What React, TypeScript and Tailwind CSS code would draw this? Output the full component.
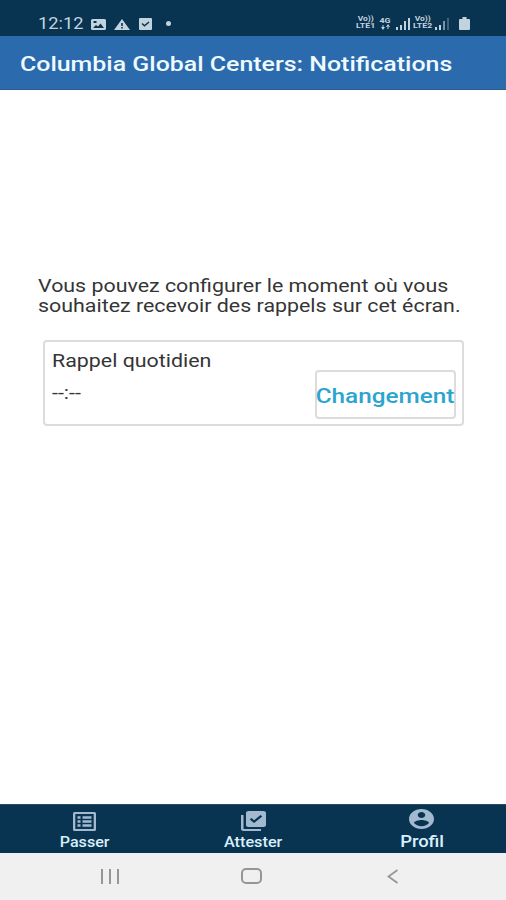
import type { ReactNode } from 'react';

function Glyph({ className, box = '0 0 24 24', children }: { className: string; box?: string; children: ReactNode }) {
  return (
    <svg viewBox={box} preserveAspectRatio="none" fill="currentColor" className={`block shrink-0 ${className}`}>
      {children}
    </svg>
  );
}

function Signal({ weak }: { weak?: boolean }) {
  return (
    <Glyph box="0 0 14 12" className="h-3 w-3.5">
      <path d="M0 9h2v3H0zM4 7h2v5H4z" />
      <path d="M8 3h2v9H8z" opacity={weak ? 0.6 : 1} />
      <path d="M12 0h2v12h-2z" opacity={weak ? 0.3 : 1} />
    </Glyph>
  );
}

function Volte({ line }: { line: string }) {
  return (
    <div className="flex w-[19px] flex-col items-center text-[7px] font-bold leading-[7px]">
      <div className="h-[7px] scale-x-[1.2]">Vo))</div>
      <div className="h-[7px] scale-x-[1.25] whitespace-nowrap">{line}</div>
    </div>
  );
}

function StatusBar() {
  return (
    <div className="flex h-9 shrink-0 items-end bg-[#083452] pb-1.5 text-[#c3d3de]">
      <div className="ml-[38px] w-[53px] text-[16px] leading-[13px]">
        <span className="inline-block origin-left scale-x-[1.14]">12:12</span>
      </div>
      <Glyph className="h-[11px] w-[15px]" box="0 0 15 11">
        <path fillRule="evenodd" d="M1.500 0h12Q15 0 15 1.500v8Q15 11 13.500 11h-12Q0 11 0 9.500v-8Q0 0 1.500 0zM2 9h11L9.500 4.500 7 7.500 5 6zM2.500 2v2h3V2z" />
      </Glyph>
      <Glyph className="ml-2 h-[11px] w-4" box="0 0 16 11">
        <path fillRule="evenodd" d="M8 0l8 11H0zM7.200 4v3h1.600V4zM7.200 8v1.500h1.600V8z" />
      </Glyph>
      <Glyph className="ml-[9px] h-3 w-[13px]" box="0 0 13 12">
        <rect width="13" height="12" rx="1" />
        <path d="M3 5.500l2.500 2.300L10 4" fill="none" stroke="#083452" strokeWidth="1.500" />
      </Glyph>
      <div className="mb-1 ml-[14px] size-[5px] rounded-full bg-current" />
      <div className="ml-auto mr-9 flex items-end">
        <Volte line="LTE1" />
        <div className="ml-[4px] w-3">
          <div className="scale-x-[1.1] text-center text-[8px] font-bold leading-[7px]">4G</div>
          <Glyph className="ml-0.5 h-[6px] w-[9px]" box="0 0 9 6">
            <path d="M0 3h4L2 6zM5 3h4L7 0zM1.500 1h1v3h-1zM6.500 2.500h1V5h-1z" />
          </Glyph>
        </div>
        <div className="ml-[5px]"><Signal /></div>
        <div className="ml-[3px]"><Volte line="LTE2" /></div>
        <div className="ml-[3px]"><Signal weak /></div>
        <Glyph className="ml-2.5 h-[13px] w-[11px]" box="0 0 11 13">
          <path d="M3.500 0h4v2H10q1 0 1 1v9q0 1-1 1H1q-1 0-1-1V3q0-1 1-1h2.500z" />
        </Glyph>
      </div>
    </div>
  );
}

function Tab({ icon, label, labelClass }: { icon: ReactNode; label: string; labelClass: string }) {
  return (
    <div className="flex flex-1 flex-col items-center">
      <div className="flex h-[28px] items-center text-[#a2b9d0]">{icon}</div>
      <span className={`text-[#d9effa] ${labelClass}`}>{label}</span>
    </div>
  );
}

export default function App() {
  return (
    <div className="flex h-[900px] w-[506px] flex-col overflow-hidden bg-white font-[Roboto,sans-serif]">
      <StatusBar />
      <header className="flex h-[54px] shrink-0 items-center border-b border-[#285b95] bg-[#2b6bad] pl-5 pt-0.5">
        <h1 className="origin-left scale-x-[1.246] whitespace-nowrap text-[20px] font-medium text-[#eefaff]">
          Columbia Global Centers: Notifications
        </h1>
      </header>

      <main className="grow pl-[38px] pt-[186px] text-[#353535]">
        <p className="w-[400px] origin-left scale-x-[1.188] whitespace-nowrap text-[18px] leading-5">
          Vous pouvez configurer le moment où vous
          <br />
          souhaitez recevoir des rappels sur cet écran.
        </p>
        <section className="ml-[5px] mt-[24px] flex h-[86px] w-[421px] justify-between rounded-[4px] border-2 border-[#dcdcdc] pl-[7px] pr-[6px]">
          <div className="origin-left scale-x-[1.188] whitespace-nowrap text-[18px] leading-5">
            <div className="mt-[9px]">Rappel quotidien</div>
            <div className="mt-[12px]">--:--</div>
          </div>
          <button className="mt-[28px] flex h-[49px] w-[141px] items-center justify-center rounded-[4px] border-2 border-[#dcdcdc] pt-0.5 text-[20px] font-medium text-[#2ba5d0]">
            <span className="scale-x-[1.215]">Changement</span>
          </button>
        </section>
      </main>

      <nav className="flex h-[49px] shrink-0 border-t border-[#2b4d64] bg-[#083452] pt-0.5">
        <Tab
          label="Passer"
          labelClass="text-[14px] leading-[14px] font-medium scale-x-[1.15]"
          icon={
            <Glyph className="mt-px h-[19px] w-[23px]" box="0 0 23 19">
              <path fillRule="evenodd" d="M1.500 0h20Q23 0 23 1.500v16Q23 19 21.500 19h-20Q0 19 0 17.500v-16Q0 0 1.500 0zM2.300 2v15h18.400V2z" />
              <path d="M4.500 4.300h3v2.500h-3zM4.500 8.300h3v2.500h-3zM4.500 12.300h3v2.500h-3zM9.500 4.300h9v2.500h-9zM9.500 8.300h9v2.500h-9zM9.500 12.300h9v2.500h-9z" />
            </Glyph>
          }
        />
        <Tab
          label="Attester"
          labelClass="text-[14px] leading-[14px] font-medium scale-x-[1.16]"
          icon={
            <Glyph className="mb-px h-[20px] w-[25px]" box="2 2 20 20">
              <path d="M20 2H8c-1.100 0-2 .9-2 2v12c0 1.100.9 2 2 2h12c1.100 0 2-.9 2-2V4c0-1.100-.9-2-2-2zm-7.530 12L9 10.500l1.400-1.410 2.070 2.080L17.600 6 19 7.410 12.470 14zM4 6H2v14c0 1.100.9 2 2 2h14v-2H4V6z" />
            </Glyph>
          }
        />
        <Tab
          label="Profil"
          labelClass="text-[16px] leading-[13px] font-medium scale-x-[1.15]"
          icon={
            <Glyph className="mb-[4px] h-[20px] w-[25px]" box="2 2 20 20">
              <path d="M12 2C6.480 2 2 6.480 2 12s4.480 10 10 10 10-4.480 10-10S17.520 2 12 2zm0 3c1.660 0 3 1.340 3 3s-1.340 3-3 3-3-1.340-3-3 1.340-3 3-3zm0 14.200c-2.500 0-4.710-1.280-6-3.220.03-1.990 4-3.080 6-3.080 1.990 0 5.970 1.090 6 3.080-1.290 1.940-3.500 3.220-6 3.220z" />
            </Glyph>
          }
        />
      </nav>

      <div className="flex h-[47px] shrink-0 items-center bg-[#f0f0f0] pb-px text-[#969696]">
        <Glyph className="ml-[101px] h-[15px] w-[18px]" box="0 0 18 15">
          <path d="M0 0h2v15H0zM8 0h2v15H8zM16 0h2v15h-2z" />
        </Glyph>
        <div className="ml-[122px] h-[16px] w-[21px] rounded-[5px] border-2 border-current" />
        <Glyph className="ml-[125px] h-[15px] w-[11px]" box="0 0 11 15">
          <path d="M10.500 1L1.500 7.500l9 6.500" fill="none" stroke="currentColor" strokeWidth="1.800" />
        </Glyph>
      </div>
    </div>
  );
}
